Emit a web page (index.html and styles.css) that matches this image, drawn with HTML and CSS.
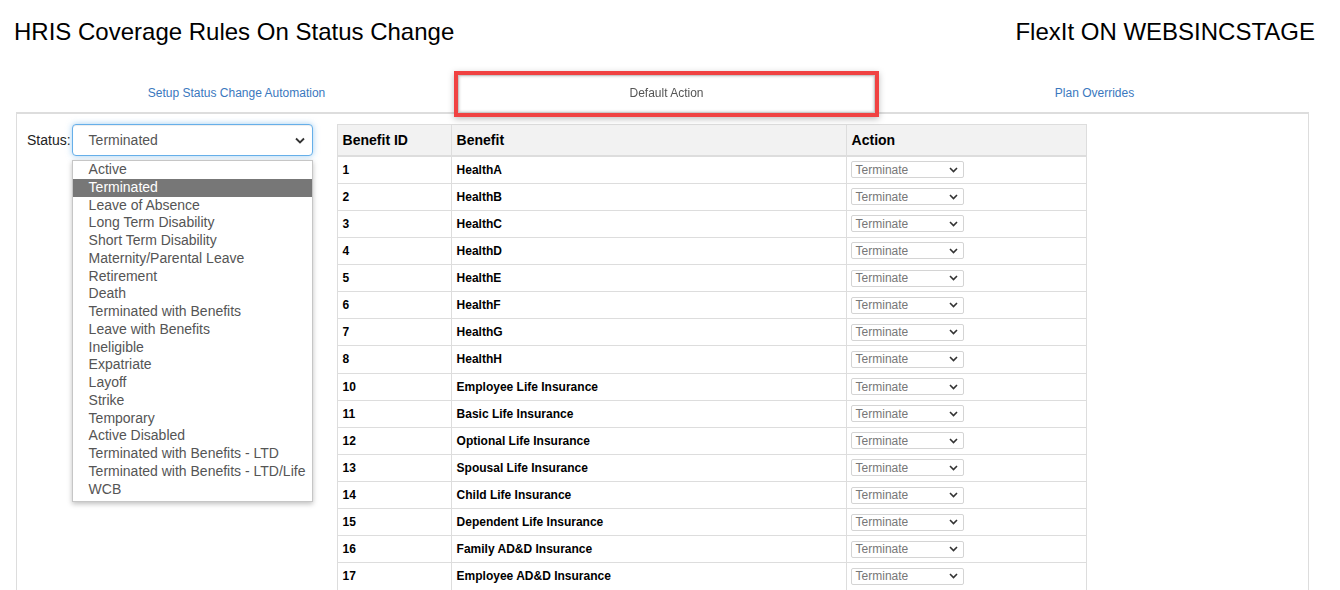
FILE: index.html
```html
<!DOCTYPE html>
<html lang="en">
<head>
<meta charset="utf-8">
<title>HRIS Coverage Rules On Status Change</title>
<link rel="stylesheet" href="styles.css">
</head>
<body>
<header class="page-header">
  <h1 class="title">HRIS Coverage Rules On Status Change</h1>
  <div class="site">FlexIt ON WEBSINCSTAGE</div>
</header>

<nav class="tabs">
  <div class="tab"><a class="tab-link">Setup Status Change Automation</a></div>
  <div class="tab"><a class="tab-link active">Default Action</a></div>
  <div class="tab"><a class="tab-link">Plan Overrides</a></div>
</nav>

<section class="panel">
  <div class="status-col">
    <label class="status-label">Status:</label>
    <div class="select-wrap">
      <div class="select focused">
        <span>Terminated</span>
        <svg class="chev" width="10" height="7" viewBox="0 0 10 7"><path d="M1 1.5 L5 5.5 L9 1.5" fill="none" stroke="#333" stroke-width="1.8"/></svg>
      </div>
      <ul class="dropdown">
        <li>Active</li>
        <li class="selected">Terminated</li>
        <li>Leave of Absence</li>
        <li>Long Term Disability</li>
        <li>Short Term Disability</li>
        <li>Maternity/Parental Leave</li>
        <li>Retirement</li>
        <li>Death</li>
        <li>Terminated with Benefits</li>
        <li>Leave with Benefits</li>
        <li>Ineligible</li>
        <li>Expatriate</li>
        <li>Layoff</li>
        <li>Strike</li>
        <li>Temporary</li>
        <li>Active Disabled</li>
        <li>Terminated with Benefits - LTD</li>
        <li>Terminated with Benefits - LTD/Life</li>
        <li>WCB</li>
      </ul>
    </div>
  </div>

  <table class="benefits">
    <colgroup><col class="c-id"><col class="c-name"><col class="c-action"></colgroup>
    <thead>
      <tr><th>Benefit ID</th><th>Benefit</th><th>Action</th></tr>
    </thead>
    <tbody>
      <tr><td>1</td><td>HealthA</td><td><div class="mini-select"><span>Terminate</span><svg width="9" height="6" viewBox="0 0 9 6"><path d="M1 1 L4.5 4.5 L8 1" fill="none" stroke="#333" stroke-width="1.6"/></svg></div></td></tr>
      <tr><td>2</td><td>HealthB</td><td><div class="mini-select"><span>Terminate</span><svg width="9" height="6" viewBox="0 0 9 6"><path d="M1 1 L4.5 4.5 L8 1" fill="none" stroke="#333" stroke-width="1.6"/></svg></div></td></tr>
      <tr><td>3</td><td>HealthC</td><td><div class="mini-select"><span>Terminate</span><svg width="9" height="6" viewBox="0 0 9 6"><path d="M1 1 L4.5 4.5 L8 1" fill="none" stroke="#333" stroke-width="1.6"/></svg></div></td></tr>
      <tr><td>4</td><td>HealthD</td><td><div class="mini-select"><span>Terminate</span><svg width="9" height="6" viewBox="0 0 9 6"><path d="M1 1 L4.5 4.5 L8 1" fill="none" stroke="#333" stroke-width="1.6"/></svg></div></td></tr>
      <tr><td>5</td><td>HealthE</td><td><div class="mini-select"><span>Terminate</span><svg width="9" height="6" viewBox="0 0 9 6"><path d="M1 1 L4.5 4.5 L8 1" fill="none" stroke="#333" stroke-width="1.6"/></svg></div></td></tr>
      <tr><td>6</td><td>HealthF</td><td><div class="mini-select"><span>Terminate</span><svg width="9" height="6" viewBox="0 0 9 6"><path d="M1 1 L4.5 4.5 L8 1" fill="none" stroke="#333" stroke-width="1.6"/></svg></div></td></tr>
      <tr><td>7</td><td>HealthG</td><td><div class="mini-select"><span>Terminate</span><svg width="9" height="6" viewBox="0 0 9 6"><path d="M1 1 L4.5 4.5 L8 1" fill="none" stroke="#333" stroke-width="1.6"/></svg></div></td></tr>
      <tr><td>8</td><td>HealthH</td><td><div class="mini-select"><span>Terminate</span><svg width="9" height="6" viewBox="0 0 9 6"><path d="M1 1 L4.5 4.5 L8 1" fill="none" stroke="#333" stroke-width="1.6"/></svg></div></td></tr>
      <tr><td>10</td><td>Employee Life Insurance</td><td><div class="mini-select"><span>Terminate</span><svg width="9" height="6" viewBox="0 0 9 6"><path d="M1 1 L4.5 4.5 L8 1" fill="none" stroke="#333" stroke-width="1.6"/></svg></div></td></tr>
      <tr><td>11</td><td>Basic Life Insurance</td><td><div class="mini-select"><span>Terminate</span><svg width="9" height="6" viewBox="0 0 9 6"><path d="M1 1 L4.5 4.5 L8 1" fill="none" stroke="#333" stroke-width="1.6"/></svg></div></td></tr>
      <tr><td>12</td><td>Optional Life Insurance</td><td><div class="mini-select"><span>Terminate</span><svg width="9" height="6" viewBox="0 0 9 6"><path d="M1 1 L4.5 4.5 L8 1" fill="none" stroke="#333" stroke-width="1.6"/></svg></div></td></tr>
      <tr><td>13</td><td>Spousal Life Insurance</td><td><div class="mini-select"><span>Terminate</span><svg width="9" height="6" viewBox="0 0 9 6"><path d="M1 1 L4.5 4.5 L8 1" fill="none" stroke="#333" stroke-width="1.6"/></svg></div></td></tr>
      <tr><td>14</td><td>Child Life Insurance</td><td><div class="mini-select"><span>Terminate</span><svg width="9" height="6" viewBox="0 0 9 6"><path d="M1 1 L4.5 4.5 L8 1" fill="none" stroke="#333" stroke-width="1.6"/></svg></div></td></tr>
      <tr><td>15</td><td>Dependent Life Insurance</td><td><div class="mini-select"><span>Terminate</span><svg width="9" height="6" viewBox="0 0 9 6"><path d="M1 1 L4.5 4.5 L8 1" fill="none" stroke="#333" stroke-width="1.6"/></svg></div></td></tr>
      <tr><td>16</td><td>Family AD&amp;D Insurance</td><td><div class="mini-select"><span>Terminate</span><svg width="9" height="6" viewBox="0 0 9 6"><path d="M1 1 L4.5 4.5 L8 1" fill="none" stroke="#333" stroke-width="1.6"/></svg></div></td></tr>
      <tr><td>17</td><td>Employee AD&amp;D Insurance</td><td><div class="mini-select"><span>Terminate</span><svg width="9" height="6" viewBox="0 0 9 6"><path d="M1 1 L4.5 4.5 L8 1" fill="none" stroke="#333" stroke-width="1.6"/></svg></div></td></tr>
    </tbody>
  </table>
</section>
</body>
</html>
```

FILE: styles.css
```css
html { overflow: hidden; }
body {
  margin: 0;
  font-family: "Liberation Sans", Arial, sans-serif;
  color: #000;
  background: #fff;
}

.page-header {
  display: flex;
  justify-content: space-between;
  align-items: flex-start;
  padding: 18px 25px 0 14px;
  height: 28px;
}
.title, .site {
  margin: 0;
  font-size: 24px;
  font-weight: normal;
  line-height: 28px;
}

.tabs {
  display: flex;
  margin: 29px 31px 0 22px;
  height: 36px;
  padding-bottom: 1px;
  position: relative;
  z-index: 2;
}
.tab {
  flex: 1;
  display: flex;
  align-items: center;
  justify-content: center;
}
.tab-link {
  font-size: 12px;
  color: #3a78be;
  text-decoration: none;
  line-height: 14px;
}
.tab-link.active {
  align-self: flex-start;
  flex: 1;
  margin: 0 5px -2px 7px;
  height: 38px;
  box-sizing: border-box;
  display: flex;
  align-items: center;
  justify-content: center;
  padding-bottom: 3px;
  color: #555;
  background: #fff;
  border: 1px solid #c8c8c8;
  box-shadow: inset 0 0 3px rgba(0,0,0,0.25);
  outline: 4px solid #f04242;
  filter: drop-shadow(0 2px 3px rgba(0,0,0,0.25));
}

.panel {
  margin: 0 31px 0 16px;
  border: 1px solid #ddd;
  border-top-width: 2px;
  padding: 10px 10px 20px;
  display: flex;
  align-items: flex-start;
  gap: 24px;
}

.status-col {
  display: flex;
  align-items: flex-start;
}
.status-label {
  font-size: 14px;
  line-height: 16px;
  margin-top: 8px;
  margin-right: 1px;
  color: #222;
}
.select-wrap {
  position: relative;
}
.select {
  width: 241px;
  height: 32px;
  box-sizing: border-box;
  border: 1px solid #66afe9;
  border-radius: 4px;
  box-shadow: inset 0 1px 1px rgba(0,0,0,.075), 0 0 6px rgba(102,175,233,.6);
  display: flex;
  align-items: center;
  justify-content: space-between;
  padding: 0 7px 0 16px;
  font-size: 14px;
  color: #555;
  background: #fff;
}
.select .chev { margin-top: 1px; }

.dropdown {
  position: absolute;
  top: 36px;
  left: 0;
  width: 241px;
  box-sizing: border-box;
  margin: 0;
  padding: 0 0 2px;
  list-style: none;
  background: #fff;
  border: 1px solid #c6c6c6;
  box-shadow: 0 2px 5px rgba(0,0,0,0.25);
  z-index: 5;
}
.dropdown li {
  font-size: 14px;
  line-height: 17.78px;
  height: 17.78px;
  padding-left: 16px;
  color: #555;
  white-space: nowrap;
}
.dropdown li.selected {
  background: #777;
  color: #fff;
}

.benefits {
  border-collapse: collapse;
  table-layout: fixed;
  width: 749px;
  border: 1px solid #ddd;
}
.c-id { width: 114px; }
.c-name { width: 395px; }
.c-action { width: 240px; }
.benefits th {
  background: #f2f2f2;
  font-size: 14px;
  font-weight: bold;
  text-align: left;
  height: 31px;
  padding: 0 5px;
  border: 1px solid #ddd;
  border-bottom-width: 2px;
  box-sizing: border-box;
}
.benefits td {
  font-size: 12px;
  font-weight: bold;
  height: 26.13px;
  padding: 0 5px;
  border: 1px solid #ddd;
  vertical-align: middle;
}
.benefits td:last-child { padding-left: 4px; }

.mini-select {
  width: 113px;
  height: 17px;
  box-sizing: border-box;
  border: 1px solid #d4d4d4;
  border-radius: 2px;
  display: flex;
  align-items: center;
  justify-content: space-between;
  padding: 0 5px 0 4px;
  font-size: 12px;
  font-weight: normal;
  color: #777;
  background: #fff;
}
```
